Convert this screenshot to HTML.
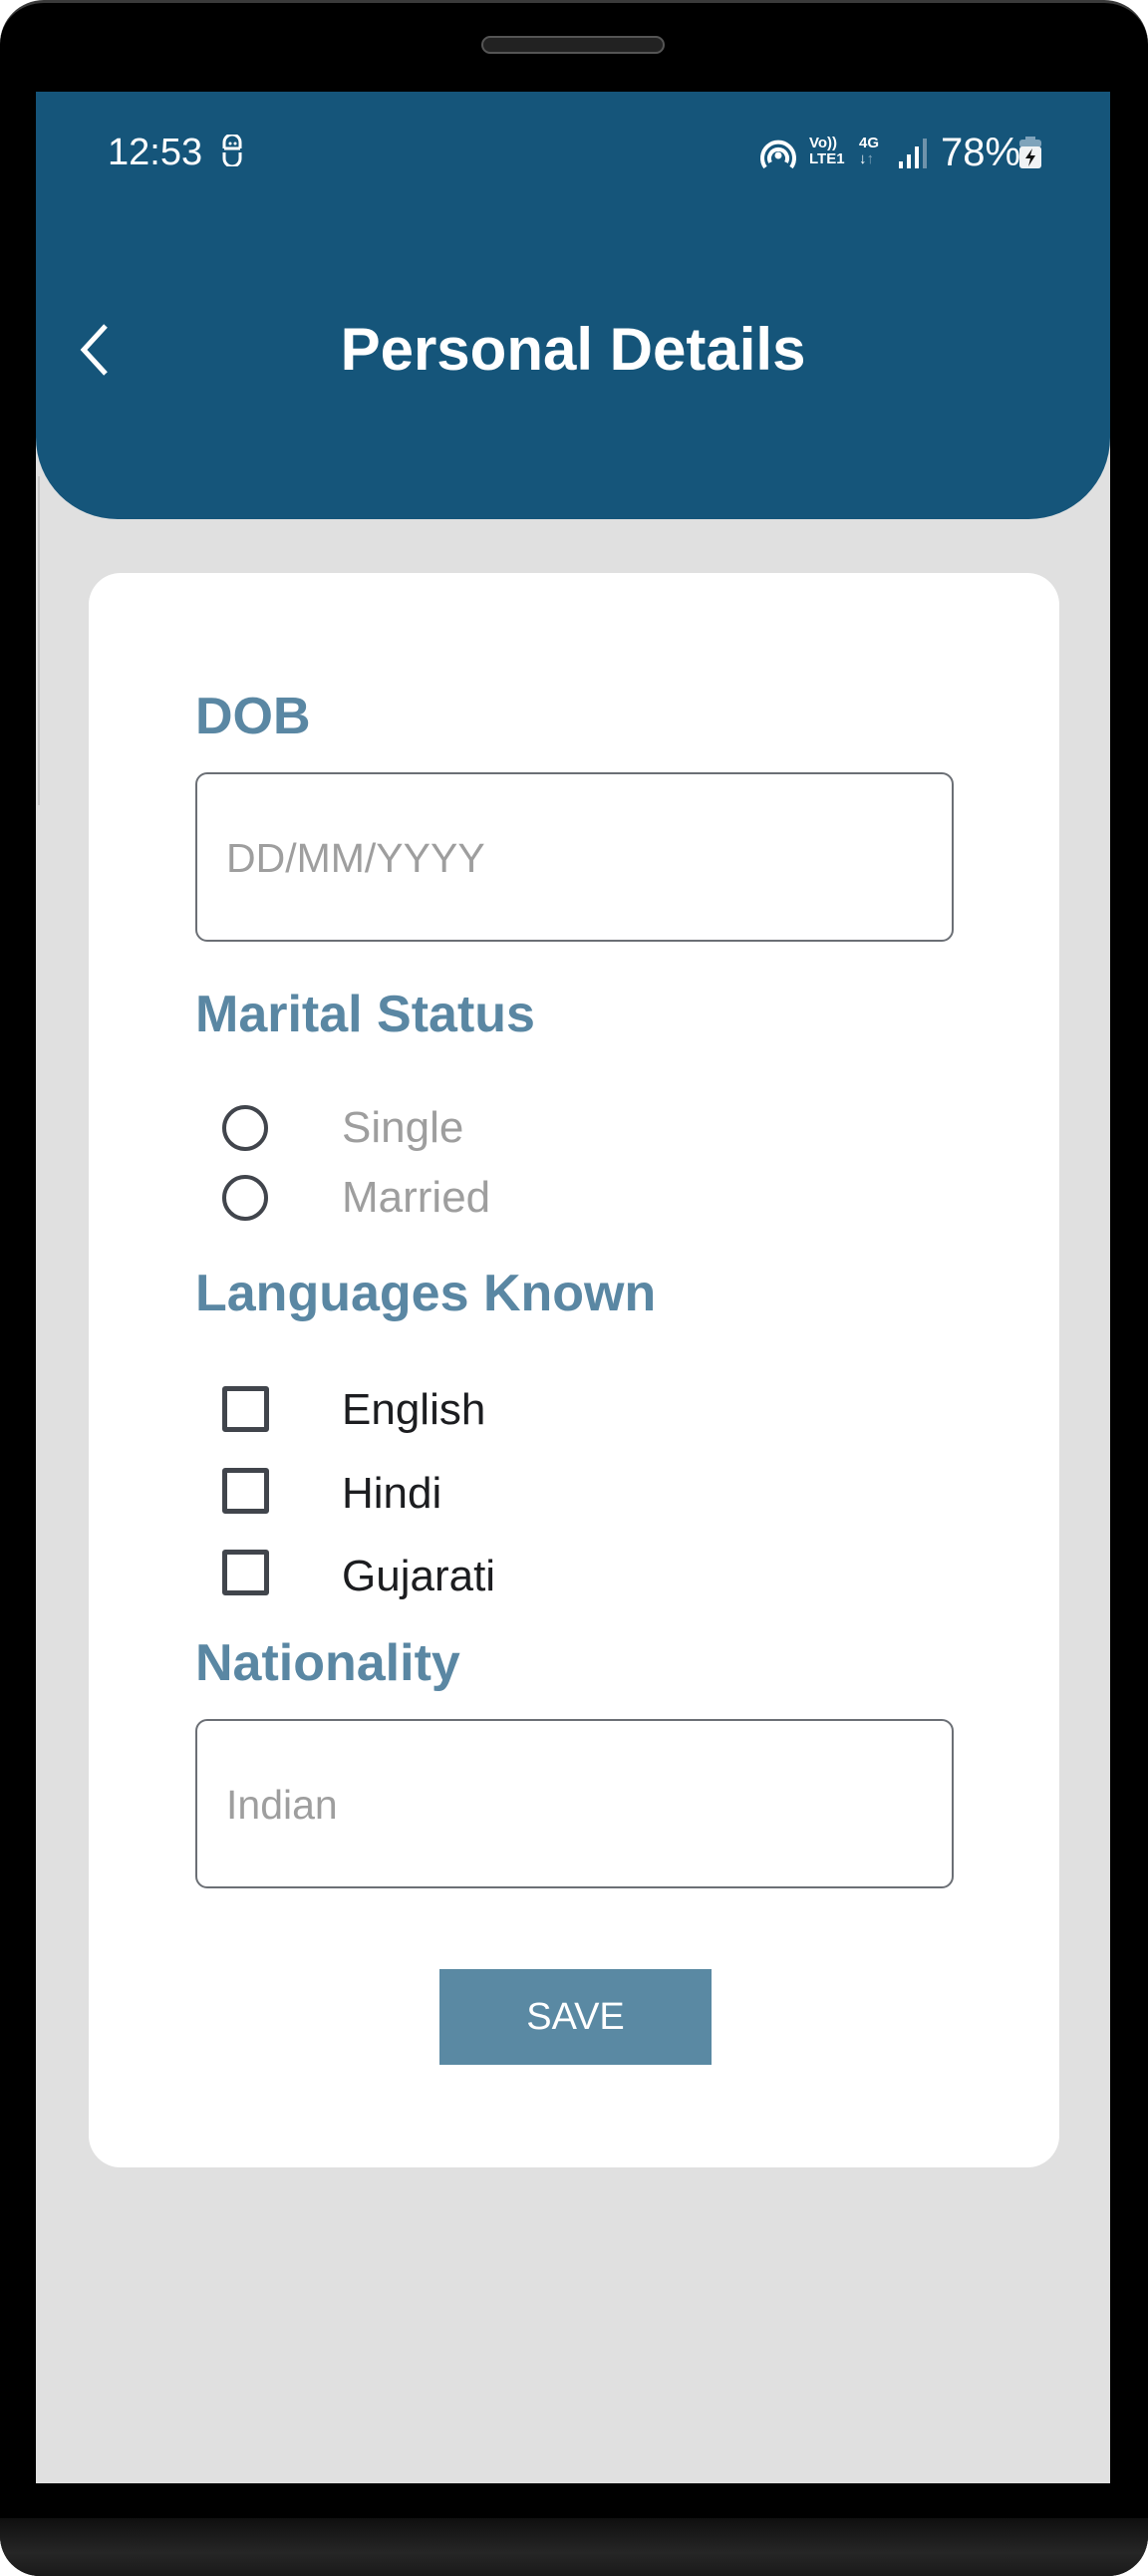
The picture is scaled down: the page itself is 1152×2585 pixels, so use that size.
<!DOCTYPE html>
<html><head><meta charset="utf-8"><style>
*{margin:0;padding:0;box-sizing:border-box}
body{width:1152px;height:2585px;background:#fff;position:relative;overflow:hidden;font-family:"Liberation Sans",sans-serif}
.frame{position:absolute;left:0;top:0;width:1152px;height:2585px;background:#000;border-radius:44px 44px 40px 40px;border-top:3px solid #3a3a3a}
.chin{position:absolute;left:0;top:2527px;width:1152px;height:58px;background:linear-gradient(#0f0f0f,#262626 60%,#1a1a1a);border-radius:0 0 40px 40px}
.speaker{position:absolute;left:483px;top:36px;width:184px;height:18px;border-radius:9px;background:#222;border:2px solid #555}
.screen{position:absolute;left:36px;top:92px;width:1078px;height:2400px;background:#e0e0e0;overflow:hidden}
.header{position:absolute;left:0;top:0;width:1078px;height:429px;background:#15557a;border-radius:0 0 82px 82px}
.abs{position:absolute;white-space:nowrap}
.card{position:absolute;left:53px;top:483px;width:974px;height:1600px;background:#fff;border-radius:32px}
.lbl{position:absolute;left:107px;color:#5a87a3;font-weight:bold;font-size:52px;line-height:60px}
.inp{position:absolute;left:107px;width:761px;height:170px;border:2px solid #6b6f75;border-radius:12px}
.ph{position:absolute;left:29px;top:56px;font-size:41px;color:#9e9e9e;line-height:56px}
.radio{position:absolute;left:134px;width:46px;height:46px;border:4.5px solid #41454c;border-radius:50%}
.cb{position:absolute;left:134px;width:47px;height:46px;border:5px solid #41454c;border-radius:3px}
.opt{position:absolute;left:254px;font-size:44px;line-height:50px}
</style></head><body>
<div class="frame"></div>
<div class="chin"></div>
<div class="speaker"></div>
<div class="screen">
 <div class="header">
  <div class="abs" style="left:72px;top:38px;color:#fff;font-size:38px;line-height:46px">12:53</div>
  <svg class="abs" style="left:186px;top:43px" width="22" height="32" viewBox="0 0 22 32"><path d="M3 14 V8 a8 8 0 0 1 16 0 V14 M3 14 H19 M3 18 v6 a8 8 0 0 0 16 0 v-6" fill="none" stroke="#fff" stroke-width="3"/><circle cx="9" cy="9" r="1.5" fill="#fff"/><circle cx="14" cy="9" r="1.5" fill="#fff"/></svg>
  <svg class="abs" style="left:726px;top:46px" width="38" height="32" viewBox="0 0 38 32"><path d="M6 30 A16 16 0 1 1 32 30 M11 25 A9 9 0 1 1 27 25" fill="none" stroke="#fff" stroke-width="4"/><circle cx="19" cy="18" r="3.5" fill="#fff"/></svg>
  <div class="abs" style="left:776px;top:44px;color:#fff;font-size:15px;font-weight:bold;line-height:16px">Vo))<br>LTE1</div>
  <div class="abs" style="left:826px;top:44px;color:#fff;font-size:15px;font-weight:bold;line-height:16px">4G<br>↓<span style="color:#7fa3bb">↑</span></div>
  <svg class="abs" style="left:866px;top:46px" width="30" height="32" viewBox="0 0 30 32"><rect x="0" y="24" width="4" height="7" fill="#fff"/><rect x="8" y="17" width="4" height="14" fill="#fff"/><rect x="16" y="9" width="4" height="22" fill="#fff"/><rect x="24" y="1" width="4" height="30" fill="#6f93ab"/></svg>
  <div class="abs" style="left:908px;top:38px;color:#fff;font-size:40px;line-height:46px">78%</div>
  <svg class="abs" style="left:987px;top:45px" width="22" height="32" viewBox="0 0 22 32"><rect x="6" y="0" width="10" height="4" fill="#7fa3bb"/><rect x="0" y="3" width="22" height="8" rx="3" fill="#7fa3bb"/><rect x="0" y="10" width="22" height="22" rx="3" fill="#f0f2f4"/><path d="M13 12 L6 22 H11 L9 30 L16 19 H11 Z" fill="#111"/></svg>
  <svg class="abs" style="left:42px;top:232px" width="32" height="54" viewBox="0 0 32 54"><path d="M28 3 L6 27 L28 51" fill="none" stroke="#fff" stroke-width="5"/></svg>
  <div class="abs" style="left:0;width:1078px;text-align:center;top:222px;color:#fff;font-size:60px;font-weight:bold;line-height:74px">Personal Details</div>
 </div>
 <div class="abs" style="left:2px;top:386px;width:2px;height:330px;background:#c8c8c8"></div>
 <div class="card">
  <div class="lbl" style="top:114px">DOB</div>
  <div class="inp" style="top:200px"><div class="ph">DD/MM/YYYY</div></div>
  <div class="lbl" style="top:413px">Marital Status</div>
  <div class="radio" style="top:534px"></div>
  <div class="opt" style="top:532px;color:#9e9e9e">Single</div>
  <div class="radio" style="top:604px"></div>
  <div class="opt" style="top:602px;color:#9e9e9e">Married</div>
  <div class="lbl" style="top:693px">Languages Known</div>
  <div class="cb" style="top:816px"></div>
  <div class="opt" style="top:815px;color:#1c1d20">English</div>
  <div class="cb" style="top:898px"></div>
  <div class="opt" style="top:899px;color:#1c1d20">Hindi</div>
  <div class="cb" style="top:980px"></div>
  <div class="opt" style="top:982px;color:#1c1d20">Gujarati</div>
  <div class="lbl" style="top:1064px">Nationality</div>
  <div class="inp" style="top:1150px"><div class="ph">Indian</div></div>
  <div class="abs" style="left:352px;top:1401px;width:273px;height:96px;background:#5a89a3;color:#fff;font-size:38px;line-height:96px;text-align:center">SAVE</div>
 </div>
</div>
</body></html>
